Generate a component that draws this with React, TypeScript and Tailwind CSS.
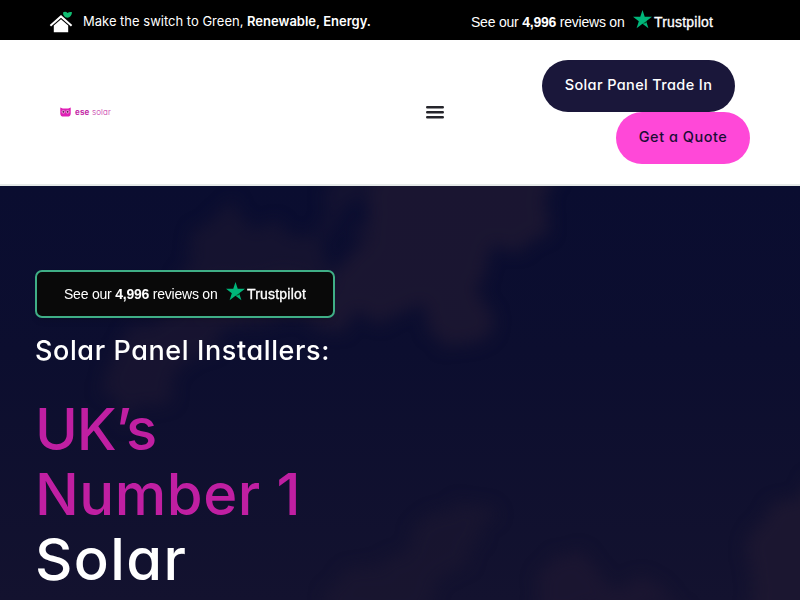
import { clsx } from "clsx";

function HouseIcon() {
  return (
    <svg viewBox="0 0 24 22" className="h-[22px] w-6 shrink-0">
      <path
        d="M14 1.400c1.500-1 3.300-.9 4.500.6C19.800.9 21.500.9 23 1.200c0 3-2 5.200-4.600 5.600C15.400 6.300 14 4.300 14 1.400Z"
        fill="#10bd72"
      />
      <path d="M1.400 14.800 12 5.400l10.600 9.400" fill="none" stroke="#fff" strokeWidth="2" />
      <path d="M4.800 14.600 12 8.300l7.200 6.300V21.300H4.800Z" fill="#fff" />
    </svg>
  );
}

function TrustStar() {
  return (
    <svg viewBox="0 0 18 18" className="-mt-[5px] h-[19px] w-[19px] shrink-0">
      <path
        d="M9 0l2.120 6.500H18l-5.500 4.100L14.600 17.200 9 13.100 3.400 17.200l2.100-6.600L0 6.500h6.880Z"
        fill="#00b67a"
      />
      <path d="M13 12.200 12.500 10.600 9 13.100Z" fill="#005128" />
    </svg>
  );
}

function Trustpilot({ className }: { className?: string }) {
  return (
    <div
      className={clsx(
        "flex items-center whitespace-nowrap font-['Liberation_Sans',sans-serif] text-[14px] leading-5 text-white",
        className
      )}
    >
      <span className="w-[154px] tracking-[-0.22px]">
        See our <b>4,996</b> reviews on
      </span>
      <span className="ml-2 flex items-center">
        <TrustStar />
        <span className="ml-[2px] text-[14px] tracking-[0.2px] [-webkit-text-stroke:0.3px_white]">
          Trustpilot
        </span>
      </span>
    </div>
  );
}

function OwlLogo() {
  return (
    <a href="#" className="ml-[60px] flex items-center">
      <svg viewBox="0 0 12 10" className="h-[10px] w-[11px]">
        <path
          d="M.3 0 3 1.200h6L11.700 0v6.500Q11.500 10 8 10H4Q.5 10 .3 6.500Z"
          fill="#df20b5"
        />
        <circle cx="3.700" cy="4.800" r="1.500" fill="#6d1760" stroke="#f3b5e6" strokeWidth=".9" />
        <circle cx="8.300" cy="4.800" r="1.500" fill="#6d1760" stroke="#f3b5e6" strokeWidth=".9" />
      </svg>
      <span className="ml-1 font-['Inter'] text-[8px] leading-none tracking-[0.15px] whitespace-nowrap text-[#c42ba8]">
        <b>ese</b> <span className="font-light">solar</span>
      </span>
    </a>
  );
}

function Clouds() {
  return (
    <svg
      viewBox="0 0 800 414"
      className="absolute inset-0 h-full w-full"
      preserveAspectRatio="none"
    >
      <defs>
        <linearGradient id="sky" x1="0" y1="0" x2="0" y2="1">
          <stop offset="0" stopColor="#0a0d30" />
          <stop offset=".4" stopColor="#0c0e2f" />
          <stop offset="1" stopColor="#13122f" />
        </linearGradient>
        <filter
          id="soft"
          filterUnits="userSpaceOnUse"
          x="-60"
          y="-60"
          width="920"
          height="540"
          colorInterpolationFilters="sRGB"
        >
          <feTurbulence type="fractalNoise" baseFrequency=".03" numOctaves="4" seed="7" result="n" />
          <feDisplacementMap
            in="SourceGraphic"
            in2="n"
            scale="36"
            xChannelSelector="R"
            yChannelSelector="G"
          />
          <feGaussianBlur stdDeviation="8" />
        </filter>
      </defs>
      <rect width="800" height="414" fill="url(#sky)" />
      <g fill="#1d1731" filter="url(#soft)">
        <path
          d="M376 -40H568L550 50 495 62 482 95 490 142 450 165 420 125 385 125 345 140 290 130 215 145 205 95 270 85 330 100 365 60Z"
          opacity=".85"
        />
        <path d="M180 90 192 45 240 18 260 42 310 42 328 95 300 125 195 130Z" opacity=".6" />
        <path d="M315 50 322 5 350 -20 368 0 335 45Z" opacity=".5" />
        <path d="M125 140 225 115 205 165 175 200 125 235 102 210Z" opacity=".65" />
        <path d="M322 430 340 385 400 372 425 328 460 315 495 328 475 355 452 388 410 430Z" opacity=".6" />
        <path d="M535 430 548 375 585 368 606 395 645 392 680 430Z" opacity=".75" />
        <path d="M840 285 775 318 750 360 742 440H840Z" opacity=".9" />
      </g>
    </svg>
  );
}

function Button({ className, children }: { className: string; children: string }) {
  return (
    <a
      href="#"
      className={clsx(
        "flex h-[52px] items-center justify-center rounded-full pb-[2px] text-[14.500px] font-medium whitespace-nowrap",
        className
      )}
    >
      {children}
    </a>
  );
}

export default function App() {
  return (
    <div className="h-[600px] w-[800px] overflow-hidden bg-white font-['Inter',sans-serif] [font-feature-settings:'cv11']">
      {/* TOP BAR */}
      <div className="flex h-10 items-center bg-black text-white">
        <div className="ml-[49px] flex w-[422px] items-center pt-[3px]">
          <HouseIcon />
          <p className="ml-[10px] pb-px text-[13px] leading-5 whitespace-nowrap [font-feature-settings:normal]">
            Make the switch to Green, <b className="font-semibold">Renewable, Energy.</b>
          </p>
        </div>
        <Trustpilot className="pt-1" />
      </div>

      {/* HEADER */}
      <header className="flex h-[146px] items-center justify-between border-b-2 border-[#e5e9e8] pr-[50px]">
        <OwlLogo />
        <div className="flex w-[324px] items-center justify-between">
          <button aria-label="Menu">
            <svg viewBox="0 0 18 14" className="h-[14px] w-[18px]">
              <path
                d="M1.200 2.200h15.600M1.200 7.200h15.600M1.200 12.200h15.600"
                stroke="#25252b"
                strokeWidth="2.400"
                strokeLinecap="round"
              />
            </svg>
          </button>
          <div className="flex flex-col items-end">
            <Button className="mr-[15px] w-[193px] bg-[#1a173a] tracking-[0.37px] text-white">
              Solar Panel Trade In
            </Button>
            <Button className="w-[134px] bg-[#ff48d8] tracking-[0.5px] text-[#1a0d35]">
              Get a Quote
            </Button>
          </div>
        </div>
      </header>

      {/* HERO */}
      <section className="relative h-[414px] overflow-hidden">
        <Clouds />
        <div className="relative px-[35px] pt-[84px] whitespace-nowrap">
          <div className="flex h-12 w-[300px] items-center rounded-[7px] border-2 border-[#3fae86] bg-[#090909] pl-[27px] shadow-md">
            <Trustpilot />
          </div>
          <p className="mt-[13px] text-[27px] leading-10 font-[450] tracking-[0.6px] text-white">
            Solar Panel Installers:
          </p>
          <h1 className="mt-[26px] text-[58px] leading-[65px] font-medium text-[#c01fa2]">
            <span className="block tracking-[-1.2px]">UK’s</span>
            <span className="block tracking-[0.5px]">Number 1</span>
            <span className="block tracking-[1.4px] text-white">Solar</span>
          </h1>
        </div>
      </section>
    </div>
  );
}
